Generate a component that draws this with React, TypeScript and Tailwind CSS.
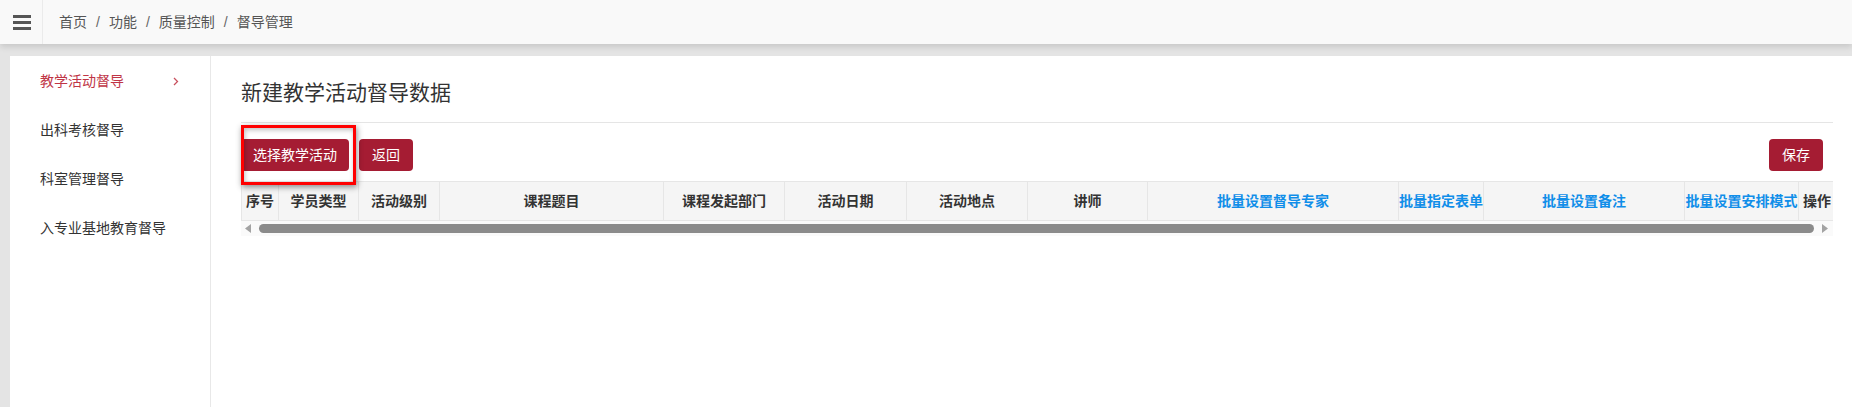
import React from "react";

const FONT = '"Liberation Sans", "Noto Sans CJK SC", sans-serif';

const crumbs = ["首页", "功能", "质量控制", "督导管理"];

const menus = [
  { label: "教学活动督导", active: true },
  { label: "出科考核督导", active: false },
  { label: "科室管理督导", active: false },
  { label: "入专业基地教育督导", active: false },
];

interface Column {
  title: string;
  width: string;
  link?: boolean;
}

const columns: Column[] = [
  { title: "序号", width: "w-[37px]" },
  { title: "学员类型", width: "w-[80px]" },
  { title: "活动级别", width: "w-[81px]" },
  { title: "课程题目", width: "w-[224px]" },
  { title: "课程发起部门", width: "w-[121px]" },
  { title: "活动日期", width: "w-[122px]" },
  { title: "活动地点", width: "w-[121px]" },
  { title: "讲师", width: "w-[120px]" },
  { title: "批量设置督导专家", width: "w-[251px]", link: true },
  { title: "批量指定表单", width: "w-[85px]", link: true },
  { title: "批量设置备注", width: "w-[201px]", link: true },
  { title: "批量设置安排模式", width: "w-[114px]", link: true },
  { title: "操作", width: "w-[37px]" },
];

function TopBar() {
  return (
    <header className="relative z-10 flex h-[44px] shrink-0 items-center bg-[#f9f9f9] shadow-[0_3px_6px_rgba(0,0,0,0.12)]">
      <div className="flex h-full w-[43px] shrink-0 items-center justify-center border-r border-[#ebebeb]">
        <div className="flex flex-col gap-[3px] pl-[1px]">
          <span className="block h-[3px] w-[18px] bg-[#555]" />
          <span className="block h-[3px] w-[18px] bg-[#555]" />
          <span className="block h-[3px] w-[18px] bg-[#555]" />
        </div>
      </div>
      <nav className="flex items-center pl-[16px] text-[14px] text-[#555]">
        {crumbs.map((c, i) => (
          <React.Fragment key={c}>
            {i > 0 && <span className="px-[9px] text-[#666]">/</span>}
            <span>{c}</span>
          </React.Fragment>
        ))}
      </nav>
    </header>
  );
}

function SideMenu() {
  return (
    <aside className="w-[201px] shrink-0 border-r border-[#e8e8e8] pt-[1px]">
      {menus.map((m) => (
        <div
          key={m.label}
          className={
            "flex h-[49px] items-center justify-between pl-[30px] pr-[31px] text-[14px] " +
            (m.active ? "text-[#c03546]" : "text-[#333]")
          }
        >
          <span>{m.label}</span>
          {m.active && (
            <svg width="6" height="9" viewBox="0 0 6 9" fill="none">
              <path d="M1 1l3.5 3.5L1 8" stroke="#c8505e" strokeWidth="1.3" />
            </svg>
          )}
        </div>
      ))}
    </aside>
  );
}

function FakeScrollbar() {
  return (
    <div className="flex h-[15px] items-center bg-[#fafafa] pl-[4px] pr-[5px]">
      <svg width="7" height="9" viewBox="0 0 7 9" className="shrink-0">
        <path d="M6 0v9L0 4.5z" fill="#a3a3a3" />
      </svg>
      <div className="mx-[7px] h-[9px] flex-1 rounded-full bg-[#8b8b8b]" />
      <svg width="7" height="9" viewBox="0 0 7 9" className="shrink-0">
        <path d="M1 0v9l6-4.5z" fill="#a3a3a3" />
      </svg>
    </div>
  );
}

export default function App() {
  return (
    <div className="flex min-h-[407px] flex-col bg-[#e4e4e4]" style={{ fontFamily: FONT }}>
      <TopBar />
      <div className="flex min-w-0 flex-1 pl-[10px] pt-[12px]">
        <div className="flex min-w-0 flex-1 bg-white">
          <SideMenu />

          <main className="min-w-0 flex-1 pl-[30px] pr-[19px] pt-[22px]">
            <h1 className="border-b border-[#e5e5e5] pb-[14px] text-[21px] leading-[30px] text-[#333]">
              新建教学活动督导数据
            </h1>

            <div className="mt-[16px] flex items-center justify-between">
              <div className="flex items-center gap-[10px]">
                <div className="relative">
                  <button className="h-[32px] rounded-[4px] bg-[#a51c33] px-[12px] text-[14px] text-white">
                    选择教学活动
                  </button>
                  {/* highlight frame around the first action */}
                  <span className="pointer-events-none absolute left-0 top-[-14px] h-[60px] w-[115px] border-[3px] border-[#ff0000] shadow-[1px_2px_6px_rgba(0,0,0,0.45),inset_1px_2px_5px_rgba(0,0,0,0.25)]" />
                </div>
                <button className="h-[32px] rounded-[4px] bg-[#a51c33] px-[13px] text-[14px] text-white">
                  返回
                </button>
              </div>
              <button className="mr-[10px] h-[32px] rounded-[4px] bg-[#a51c33] px-[13px] text-[14px] text-white">
                保存
              </button>
            </div>

            <div className="mt-[10px] overflow-hidden">
              <div className="flex w-max border-y border-l border-[#e6e6e6] bg-[#f5f5f5]">
                {columns.map((col) => (
                  <div
                    key={col.title}
                    className={
                      col.width +
                      " flex h-[38px] shrink-0 items-center justify-center whitespace-nowrap border-r border-[#e6e6e6] text-[14px] font-bold " +
                      (col.link ? "text-[#108ee9]" : "text-[#333]")
                    }
                  >
                    {col.title}
                  </div>
                ))}
              </div>
              <FakeScrollbar />
            </div>
          </main>
        </div>
      </div>
    </div>
  );
}
